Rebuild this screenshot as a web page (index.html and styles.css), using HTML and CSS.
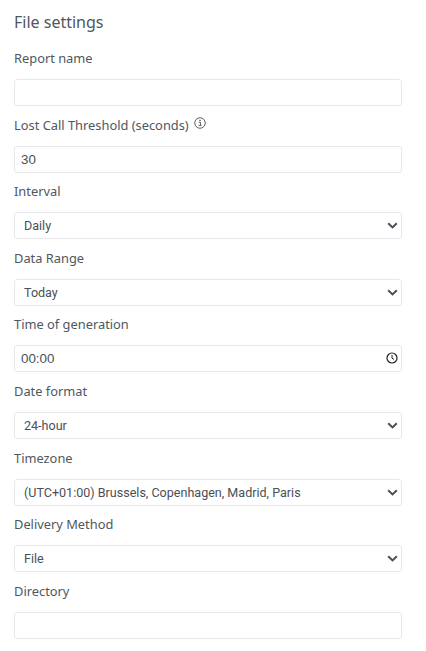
FILE: index.html
```html
<!DOCTYPE html>
<html lang="en">
<head>
<meta charset="utf-8">
<title>File settings</title>
<link rel="stylesheet" href="styles.css">
</head>
<body>
<form class="settings">
  <h2 class="title">File settings</h2>
  <div class="field">
    <label class="label">Report name</label>
    <input class="control" type="text">
  </div>
  <div class="field">
    <label class="label">Lost Call Threshold (seconds)
      <svg class="info" viewBox="0 0 16 16" width="12" height="12" aria-hidden="true"><circle cx="8" cy="8" r="7" fill="none" stroke="#495057" stroke-width="1.2"/><circle cx="8" cy="4.8" r="1" fill="#495057"/><path d="M6.4 7h2.2v4.2M6.2 11.4h3.8" fill="none" stroke="#495057" stroke-width="1.2"/></svg>
    </label>
    <input class="control plain" type="text" value="30">
  </div>
  <div class="field">
    <label class="label">Interval</label>
    <select class="control select"><option>Daily</option></select>
  </div>
  <div class="field">
    <label class="label">Data Range</label>
    <select class="control select"><option>Today</option></select>
  </div>
  <div class="field">
    <label class="label">Time of generation</label>
    <div class="time-wrap">
      <input class="control plain" type="text" value="00:00">
      <svg class="clock" viewBox="0 0 12 12" width="12" height="12" aria-hidden="true"><circle cx="6" cy="6" r="5" fill="none" stroke="#1f2327" stroke-width="1.2"/><path d="M6 3v3.2l2 1.2" fill="none" stroke="#1f2327" stroke-width="1"/></svg>
    </div>
  </div>
  <div class="field">
    <label class="label">Date format</label>
    <select class="control select"><option>24-hour</option></select>
  </div>
  <div class="field">
    <label class="label">Timezone</label>
    <select class="control select"><option>(UTC+01:00) Brussels, Copenhagen, Madrid, Paris</option></select>
  </div>
  <div class="field">
    <label class="label">Delivery Method</label>
    <select class="control select"><option>File</option></select>
  </div>
  <div class="field">
    <label class="label">Directory</label>
    <input class="control" type="text">
  </div>
</form>
</body>
</html>
```
FILE: styles.css
```css
* { box-sizing: border-box; }
html, body { margin: 0; background: #fff; overflow: hidden; }
.settings {
  display: flex;
  flex-direction: column;
  width: 388px;
  margin-left: 14px;
  padding-top: 11px;
  font-family: "Noto Sans", sans-serif;
  color: #50575e;
}
.title {
  margin: 0 0 12px;
  font-size: 16px;
  line-height: 22px;
  font-weight: 400;
}
.field {
  display: flex;
  flex-direction: column;
  height: 66.6px;
}
.label {
  display: flex;
  align-items: flex-start;
  gap: 5px;
  height: 34px;
  flex: none;
  padding-top: 4px;
  font-size: 12.85px;
  line-height: 18px;
}
.info { flex: none; margin-top: 1px; }
.control {
  width: 388px;
  height: 27px;
  border: 1px solid #e6e8eb;
  border-radius: 3px;
  background: #fff;
  color: #495057;
  font-size: 13px;
  outline: none;
}
.plain { padding: 0 6px; font-family: "Liberation Sans", sans-serif; font-size: 13.33px; }
.select {
  appearance: none;
  padding: 0 9px;
  font-family: Roboto, sans-serif;
  font-size: 12.55px;
  background-image: url("data:image/svg+xml,%3Csvg xmlns='http://www.w3.org/2000/svg' width='11' height='7' viewBox='0 0 11 7'%3E%3Cpath d='M1.2 1.2 5.5 5.4l4.3-4.2' fill='none' stroke='%23495057' stroke-width='2'/%3E%3C/svg%3E");
  background-repeat: no-repeat;
  background-position: right 3.5px center;
}
.time-wrap { position: relative; }
.clock { position: absolute; right: 4px; top: 7px; }
```
